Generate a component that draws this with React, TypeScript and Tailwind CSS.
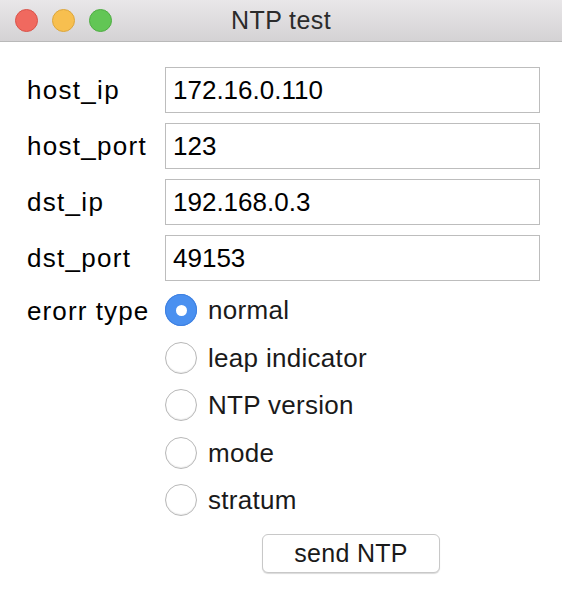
import React, { useState } from 'react';

const fields = [
  { label: 'host_ip', value: '172.16.0.110' },
  { label: 'host_port', value: '123' },
  { label: 'dst_ip', value: '192.168.0.3' },
  { label: 'dst_port', value: '49153' },
];

const errorTypes = ['normal', 'leap indicator', 'NTP version', 'mode', 'stratum'];

const Radio = ({ checked }: { checked: boolean }) =>
  checked ? (
    <span className="flex h-[32px] w-[32px] items-center justify-center rounded-full bg-[#4a90f0] shadow-[inset_0_0_0_1px_#3f80e0]">
      <span className="h-[11px] w-[11px] rounded-full bg-white" />
    </span>
  ) : (
    <span className="h-[32px] w-[32px] rounded-full border border-[#b8b8b8] bg-white shadow-[inset_0_-1px_1px_rgba(0,0,0,0.08)]" />
  );

export default function App() {
  const [selected, setSelected] = useState('normal');

  return (
    <div className="h-[602px] w-[562px] overflow-hidden bg-white font-['Liberation_Sans',Arial,sans-serif] text-black">
      {/* Title bar */}
      <div className="relative flex h-[42px] items-center border-b border-[#b9b9b9] bg-gradient-to-b from-[#e9e7e9] to-[#d4d2d4]">
        <div className="absolute left-[15px] top-[9px] flex gap-[14px]">
          <span className="h-[23px] w-[23px] rounded-full border border-[#d9534a] bg-[#f0695f]" />
          <span className="h-[23px] w-[23px] rounded-full border border-[#dca63c] bg-[#f7bf4f]" />
          <span className="h-[23px] w-[23px] rounded-full border border-[#4fad43] bg-[#62c655]" />
        </div>
        <div className="w-full text-center text-[25px] tracking-[0.4px] text-[#2b2b2b]">NTP test</div>
      </div>

      {/* Form */}
      <div className="flex flex-col pl-[27px] pr-[22px] pt-[25px]">
        <div className="flex flex-col gap-[10px]">
          {fields.map((f) => (
            <div key={f.label} className="flex items-center">
              <div className="w-[138px] text-[26px] tracking-[1.3px]">{f.label}</div>
              <div className="flex h-[46px] flex-1 items-center border border-[#bdbdbd] pl-[7px] text-[26px]">
                {f.value}
              </div>
            </div>
          ))}
        </div>

        <div className="mt-[13px] flex">
          <div className="w-[138px] pt-[1px] text-[26px] leading-[32px] tracking-[1.1px]">erorr type</div>
          <div className="flex flex-col gap-[15.5px]">
            {errorTypes.map((t) => (
              <button
                key={t}
                onClick={() => setSelected(t)}
                className="flex items-center gap-[11px] text-left text-[26px] leading-[32px] tracking-[0.3px]"
              >
                <Radio checked={selected === t} />
                <span className="text-[#1a1a1a]">{t}</span>
              </button>
            ))}
          </div>
        </div>

        <div className="ml-[235px] mt-[18px] flex">
          <button className="h-[39px] w-[178px] rounded-[6px] border border-[#c8c8c8] bg-white text-[25px] tracking-[0.3px] text-[#1a1a1a] shadow-[0_1px_1px_rgba(0,0,0,0.15)]">
            send NTP
          </button>
        </div>
      </div>
    </div>
  );
}
